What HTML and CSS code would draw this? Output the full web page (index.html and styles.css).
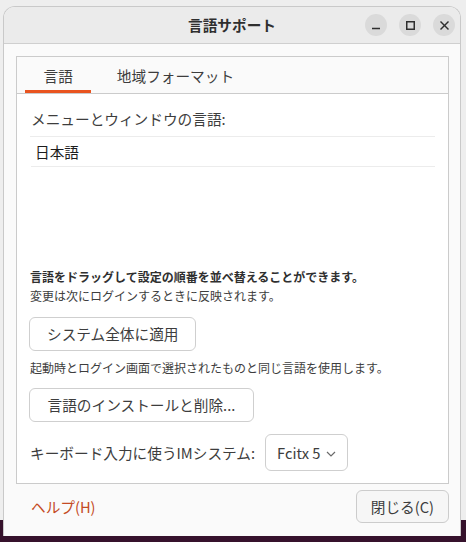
FILE: index.html
```html
<!DOCTYPE html>
<html lang="ja">
<head>
<meta charset="utf-8">
<title>言語サポート</title>
<link rel="stylesheet" href="styles.css">
</head>
<body>
<div class="window">
  <header class="titlebar">
    <div class="spacer"></div>
    <div class="title">言語サポート</div>
    <div class="controls">
      <span class="ctl"><svg width="22" height="22" viewBox="0 0 22 22"><line x1="7" y1="14.5" x2="15" y2="14.5" /></svg></span>
      <span class="ctl"><svg width="22" height="22" viewBox="0 0 22 22"><rect x="7.75" y="7.75" width="7.5" height="7.5" /></svg></span>
      <span class="ctl"><svg width="22" height="22" viewBox="0 0 22 22"><line x1="7.5" y1="7.5" x2="15.5" y2="15.5" /><line x1="15.5" y1="7.5" x2="7.5" y2="15.5" /></svg></span>
    </div>
  </header>
  <main class="content">
    <section class="notebook">
      <nav class="tabs">
        <div class="tab active">言語</div>
        <div class="tab">地域フォーマット</div>
      </nav>
      <div class="page">
        <div class="label">メニューとウィンドウの言語:</div>
        <div class="langlist">
          <div class="langrow">日本語</div>
        </div>
        <p class="hint bold">言語をドラッグして設定の順番を並べ替えることができます。</p>
        <p class="hint second">変更は次にログインするときに反映されます。</p>
        <button class="btn apply">システム全体に適用</button>
        <p class="hint third">起動時とログイン画面で選択されたものと同じ言語を使用します。</p>
        <button class="btn install">言語のインストールと削除...</button>
        <div class="imrow">
          <span class="imlabel">キーボード入力に使うIMシステム:</span>
          <button class="combo">Fcitx 5<svg class="chev" width="10" height="6" viewBox="0 0 10 6"><polyline points="1,1 5,5 9,1" /></svg></button>
        </div>
      </div>
    </section>
    <footer class="actions">
      <span class="help">ヘルプ(H)</span>
      <button class="btn close">閉じる(C)</button>
    </footer>
  </main>
</div>
</body>
</html>
```

FILE: styles.css
```css
html, body {
  margin: 0;
  padding: 0;
}
body {
  width: 466px;
  height: 542px;
  overflow: hidden;
  background: linear-gradient(to bottom, #eeeeee 0, #eeeeee 520px, #36122c 520px, #36122c 100%);
  font-family: "Noto Sans CJK JP", "Noto Sans", sans-serif;
  color: #3d3d3d;
}
.window {
  margin: 6px 0 0 3px;
  width: 458px;
  box-sizing: border-box;
  border: 1px solid #c9c9c9;
  border-bottom: none;
  border-radius: 12px 12px 0 0;
  background: #fafafa;
  overflow: hidden;
}
.titlebar {
  height: 36px;
  border-bottom: 1px solid #cfcfcf;
  background: #ebebeb;
  display: grid;
  grid-template-columns: 1fr auto 1fr;
  align-items: center;
}
.title {
  font-size: 14.67px;
  font-weight: bold;
  color: #2f2f2f;
  line-height: 20px;
}
.controls {
  display: flex;
  justify-content: flex-end;
  gap: 12px;
  padding-right: 5px;
}
.ctl {
  width: 22px;
  height: 22px;
  border-radius: 50%;
  background: #dadada;
  display: block;
}
.ctl svg {
  display: block;
  fill: none;
  stroke: #2e2e2e;
  stroke-width: 1.5;
}
.content {
  padding: 12px 11px 0 12px;
}
.notebook {
  border: 1px solid #cbcbcb;
  background: #ffffff;
}
.tabs {
  display: flex;
  gap: 7px;
  padding-left: 8px;
  background: #fafafa;
  border-bottom: 1px solid #cbcbcb;
}
.tab {
  height: 36px;
  box-sizing: border-box;
  padding: 4px 18.5px 0;
  line-height: 29px;
  font-size: 14.67px;
  color: #3d3d3d;
}
.tab.active {
  box-shadow: inset 0 -3px 0 #e95420;
}
.page {
  padding: 15px 13px 12px 13px;
}
.label {
  font-size: 14.67px;
  line-height: 20px;
  padding-left: 1px;
}
.langlist {
  margin-top: 7px;
  height: 132px;
  box-sizing: border-box;
  border-top: 1px solid #ececec;
  padding-left: 1px;
}
.langrow {
  height: 29px;
  line-height: 29px;
  padding-left: 4px;
  font-size: 14.67px;
  color: #1c1c1c;
  border-bottom: 1px solid #ececec;
}
.hint {
  margin: 0;
  font-size: 12px;
  line-height: 18px;
  color: #3d3d3d;
}
.hint.bold {
  font-weight: bold;
  color: #2f2f2f;
}
.hint.second {
  margin-top: 1px;
}
.hint.third {
  margin-top: 8px;
}
.btn {
  display: block;
  font-family: inherit;
  font-size: 14.67px;
  color: #3d3d3d;
  background: #ffffff;
  border: 1px solid #cfcfcf;
  border-radius: 6px;
  height: 34px;
  padding: 0 17px;
  line-height: 20px;
  margin-left: -1px;
}
.btn.apply {
  margin-top: 12px;
}
.btn.install {
  margin-top: 11px;
  padding: 0 17.5px;
}
.imrow {
  margin-top: 12px;
  display: flex;
  align-items: center;
  gap: 10px;
}
.imlabel {
  font-size: 14.67px;
  line-height: 20px;
}
.combo {
  font-family: inherit;
  font-size: 14.67px;
  color: #3d3d3d;
  background: #ffffff;
  border: 1px solid #cfcfcf;
  border-radius: 6px;
  height: 37px;
  padding: 0 11px 0 11px;
  display: flex;
  align-items: center;
  gap: 6px;
}
.chev {
  fill: none;
  stroke: #6a6a6a;
  stroke-width: 1.2;
  margin-top: 2px;
}
.actions {
  display: flex;
  justify-content: space-between;
  align-items: center;
  padding: 6px 0 13px 15px;
}
.help {
  font-size: 14.67px;
  color: #c44a24;
  line-height: 20px;
}
.btn.close {
  height: 33px;
  padding: 0 14px;
  background: #f6f6f6;
  border-color: #cccccc;
  margin-right: 0;
}
```
